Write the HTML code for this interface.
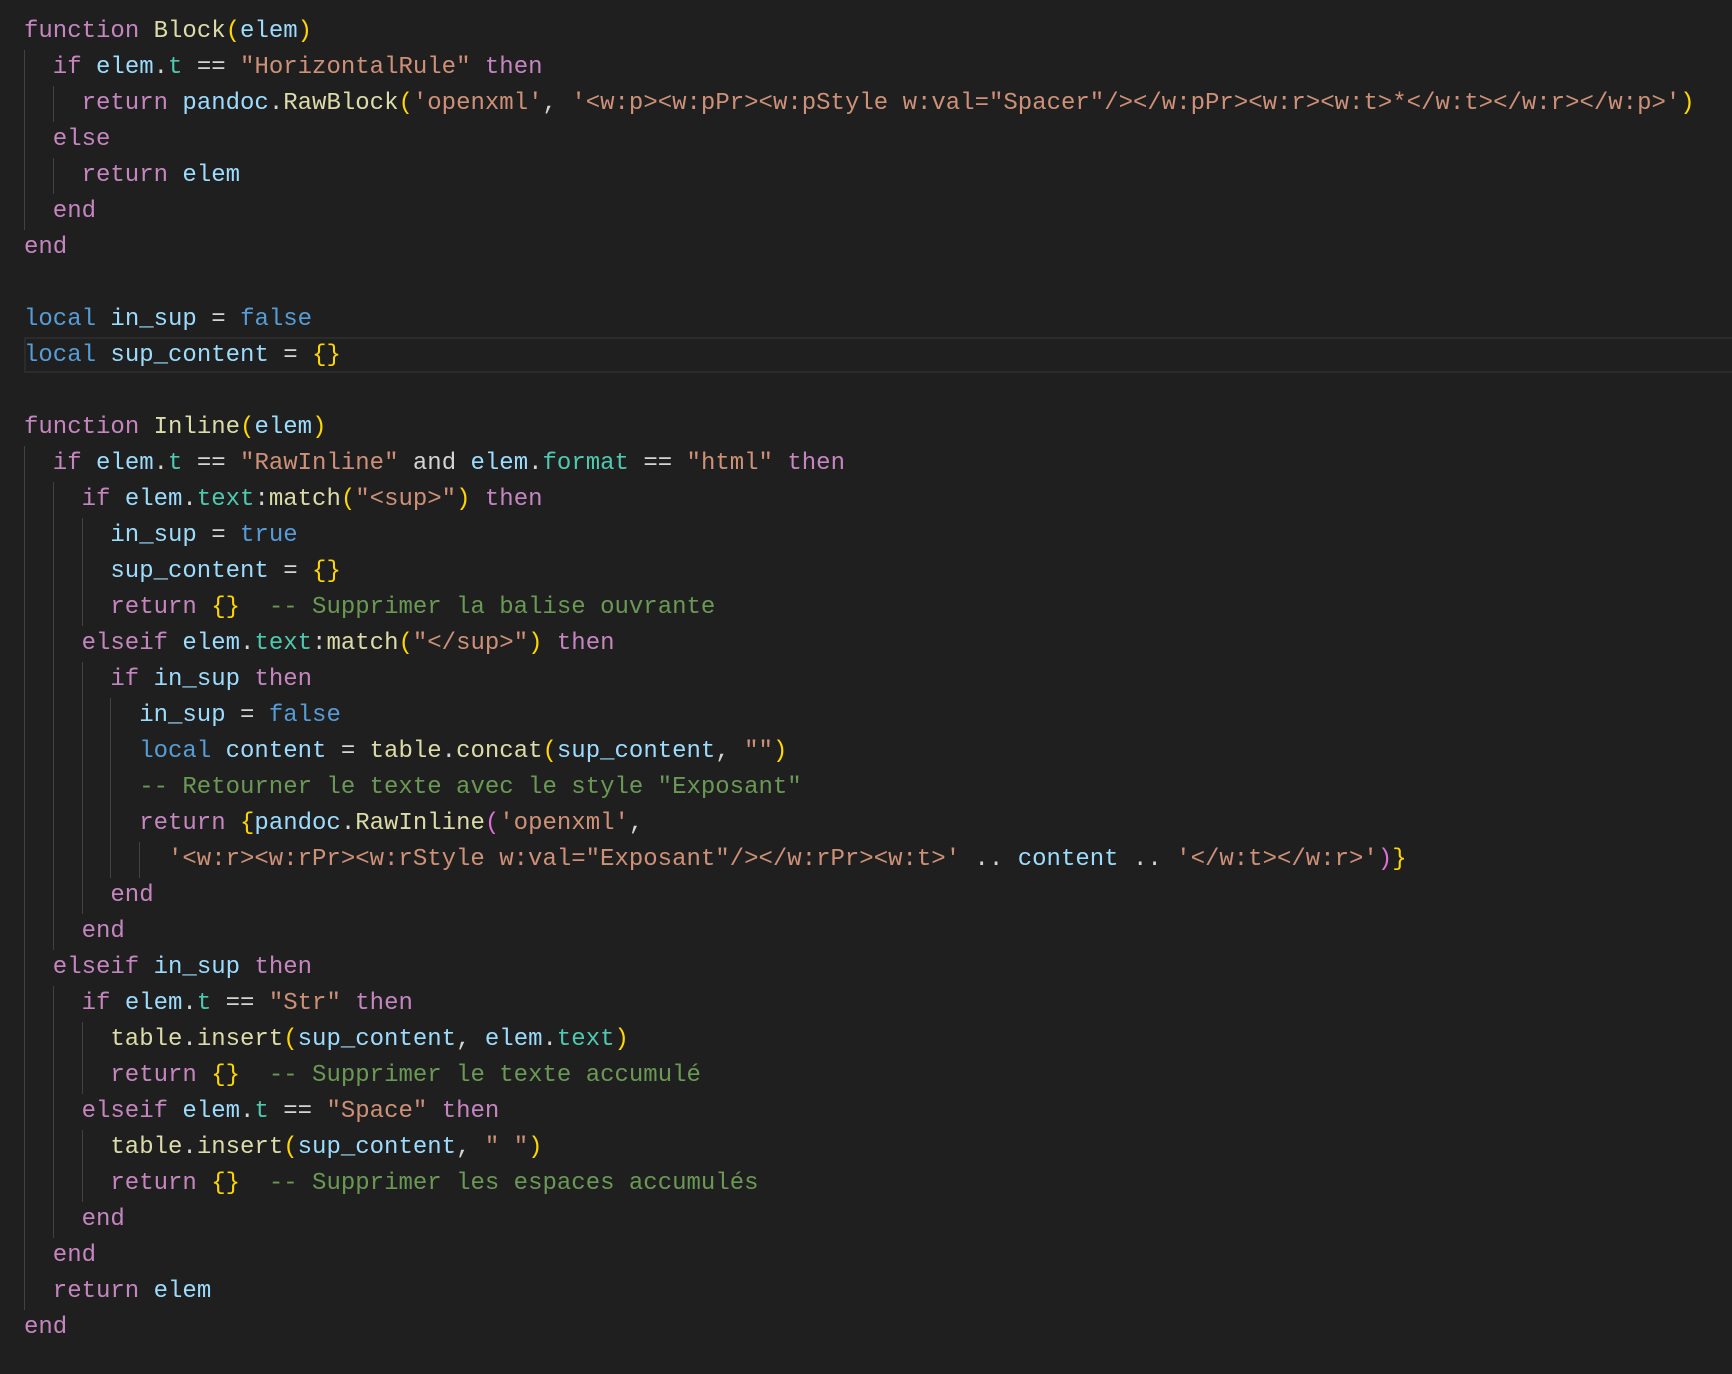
<!DOCTYPE html>
<html><head><meta charset="utf-8"><style>
html,body{margin:0;padding:0;background:#1f1f1f;width:1732px;height:1374px;overflow:hidden}
#code{position:absolute;left:24px;top:14px;font-family:"Liberation Mono","DejaVu Sans Mono",monospace;font-size:24px;color:#d4d4d4}
.l{height:36px;line-height:36px;white-space:pre}
.hl{position:absolute;left:24px;top:337px;width:1720px;height:32px;border:2px solid #2b2b2b;border-right:none;background:#1f1f1f}
i{display:inline-block;width:2ch;height:36px;vertical-align:top;box-shadow:inset 1px 0 #424242}
.k{color:#c586c0}.b{color:#569cd6}.v{color:#9cdcfe}.f{color:#dcdcaa}.p{color:#4ec9b0}.s{color:#ce9178}.c{color:#6a9955}.y{color:#ffd700}.m{color:#da70d6}
</style></head><body>
<div class="hl"></div>
<div id="code"><div class="l"><span class="k">function</span> <span class="f">Block</span><span class="y">(</span><span class="v">elem</span><span class="y">)</span></div><div class="l"><i></i><span class="k">if</span> <span class="v">elem</span>.<span class="p">t</span> == <span class="s">"HorizontalRule"</span> <span class="k">then</span></div><div class="l"><i></i><i></i><span class="k">return</span> <span class="v">pandoc</span>.<span class="f">RawBlock</span><span class="y">(</span><span class="s">'openxml'</span>, <span class="s">'&lt;w:p&gt;&lt;w:pPr&gt;&lt;w:pStyle w:val="Spacer"/&gt;&lt;/w:pPr&gt;&lt;w:r&gt;&lt;w:t&gt;*&lt;/w:t&gt;&lt;/w:r&gt;&lt;/w:p&gt;'</span><span class="y">)</span></div><div class="l"><i></i><span class="k">else</span></div><div class="l"><i></i><i></i><span class="k">return</span> <span class="v">elem</span></div><div class="l"><i></i><span class="k">end</span></div><div class="l"><span class="k">end</span></div><div class="l"> </div><div class="l"><span class="b">local</span> <span class="v">in_sup</span> = <span class="b">false</span></div><div class="l"><span class="b">local</span> <span class="v">sup_content</span> = <span class="y">{}</span></div><div class="l"> </div><div class="l"><span class="k">function</span> <span class="f">Inline</span><span class="y">(</span><span class="v">elem</span><span class="y">)</span></div><div class="l"><i></i><span class="k">if</span> <span class="v">elem</span>.<span class="p">t</span> == <span class="s">"RawInline"</span> and <span class="v">elem</span>.<span class="p">format</span> == <span class="s">"html"</span> <span class="k">then</span></div><div class="l"><i></i><i></i><span class="k">if</span> <span class="v">elem</span>.<span class="p">text</span>:<span class="f">match</span><span class="y">(</span><span class="s">"&lt;sup&gt;"</span><span class="y">)</span> <span class="k">then</span></div><div class="l"><i></i><i></i><i></i><span class="v">in_sup</span> = <span class="b">true</span></div><div class="l"><i></i><i></i><i></i><span class="v">sup_content</span> = <span class="y">{}</span></div><div class="l"><i></i><i></i><i></i><span class="k">return</span> <span class="y">{}</span>  <span class="c">-- Supprimer la balise ouvrante</span></div><div class="l"><i></i><i></i><span class="k">elseif</span> <span class="v">elem</span>.<span class="p">text</span>:<span class="f">match</span><span class="y">(</span><span class="s">"&lt;/sup&gt;"</span><span class="y">)</span> <span class="k">then</span></div><div class="l"><i></i><i></i><i></i><span class="k">if</span> <span class="v">in_sup</span> <span class="k">then</span></div><div class="l"><i></i><i></i><i></i><i></i><span class="v">in_sup</span> = <span class="b">false</span></div><div class="l"><i></i><i></i><i></i><i></i><span class="b">local</span> <span class="v">content</span> = <span class="f">table</span>.<span class="f">concat</span><span class="y">(</span><span class="v">sup_content</span>, <span class="s">""</span><span class="y">)</span></div><div class="l"><i></i><i></i><i></i><i></i><span class="c">-- Retourner le texte avec le style "Exposant"</span></div><div class="l"><i></i><i></i><i></i><i></i><span class="k">return</span> <span class="y">{</span><span class="v">pandoc</span>.<span class="f">RawInline</span><span class="m">(</span><span class="s">'openxml'</span>,</div><div class="l"><i></i><i></i><i></i><i></i><i></i><span class="s">'&lt;w:r&gt;&lt;w:rPr&gt;&lt;w:rStyle w:val="Exposant"/&gt;&lt;/w:rPr&gt;&lt;w:t&gt;'</span> .. <span class="v">content</span> .. <span class="s">'&lt;/w:t&gt;&lt;/w:r&gt;'</span><span class="m">)</span><span class="y">}</span></div><div class="l"><i></i><i></i><i></i><span class="k">end</span></div><div class="l"><i></i><i></i><span class="k">end</span></div><div class="l"><i></i><span class="k">elseif</span> <span class="v">in_sup</span> <span class="k">then</span></div><div class="l"><i></i><i></i><span class="k">if</span> <span class="v">elem</span>.<span class="p">t</span> == <span class="s">"Str"</span> <span class="k">then</span></div><div class="l"><i></i><i></i><i></i><span class="f">table</span>.<span class="f">insert</span><span class="y">(</span><span class="v">sup_content</span>, <span class="v">elem</span>.<span class="p">text</span><span class="y">)</span></div><div class="l"><i></i><i></i><i></i><span class="k">return</span> <span class="y">{}</span>  <span class="c">-- Supprimer le texte accumulé</span></div><div class="l"><i></i><i></i><span class="k">elseif</span> <span class="v">elem</span>.<span class="p">t</span> == <span class="s">"Space"</span> <span class="k">then</span></div><div class="l"><i></i><i></i><i></i><span class="f">table</span>.<span class="f">insert</span><span class="y">(</span><span class="v">sup_content</span>, <span class="s">" "</span><span class="y">)</span></div><div class="l"><i></i><i></i><i></i><span class="k">return</span> <span class="y">{}</span>  <span class="c">-- Supprimer les espaces accumulés</span></div><div class="l"><i></i><i></i><span class="k">end</span></div><div class="l"><i></i><span class="k">end</span></div><div class="l"><i></i><span class="k">return</span> <span class="v">elem</span></div><div class="l"><span class="k">end</span></div></div>
</body></html>
